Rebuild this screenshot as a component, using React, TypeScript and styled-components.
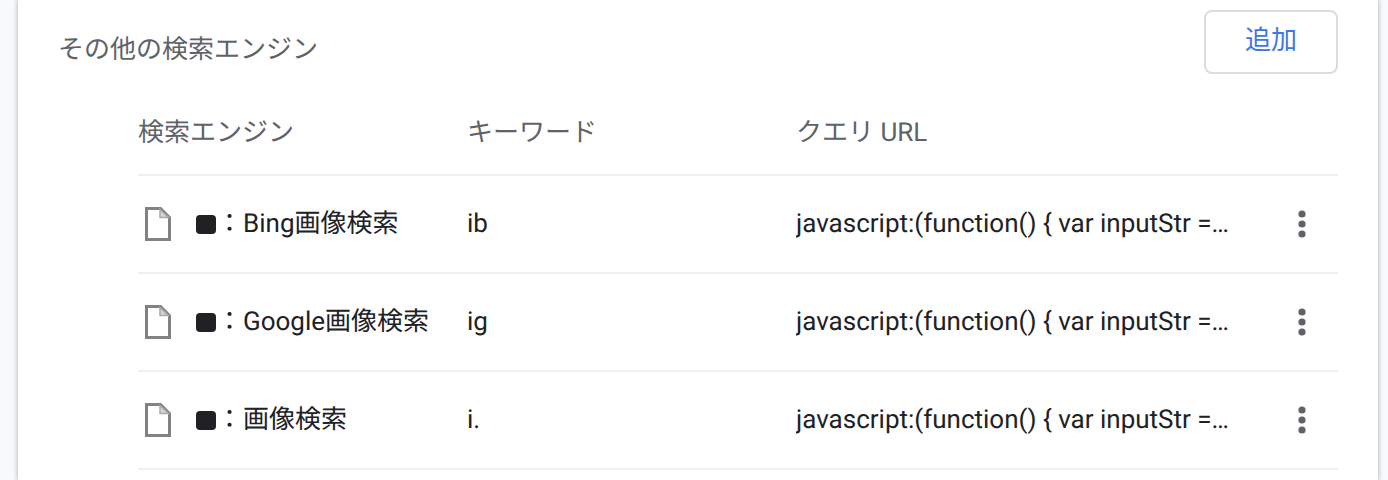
import { createGlobalStyle } from "styled-components";
import styled from "styled-components";

const GlobalStyle = createGlobalStyle`
  html, body {
    margin: 0;
    height: 480px;
    overflow: hidden;
    background: #f8f9fa;
    font-family: Roboto, "Noto Sans CJK JP", sans-serif;
    text-rendering: geometricPrecision;
  }
`;

const Card = styled.section`
  margin-left: 18px;
  width: 1360px;
  height: 480px;
  box-sizing: border-box;
  padding: 10px 40px 0;
  background: #fff;
  box-shadow: 0 0 5px rgba(60, 64, 67, 0.45);
`;

const TitleRow = styled.header`
  display: flex;
  align-items: flex-start;
  justify-content: space-between;
  height: 64px;
`;

const Title = styled.h2`
  margin: 22px 0 0;
  font-size: 26px;
  line-height: 36px;
  font-weight: 400;
  color: #5f6368;
`;

const AddButton = styled.button`
  width: 134px;
  height: 64px;
  box-sizing: border-box;
  padding: 0 0 10px;
  background: #fff;
  border: 2px solid #dadce0;
  border-radius: 8px;
  font: inherit;
  font-size: 26px;
  color: #3b78e7;
`;

const Table = styled.div`
  margin-left: 80px;
`;

const columns = "329px 329px 1fr 80px";

const HeaderRow = styled.div`
  display: grid;
  grid-template-columns: ${columns};
  align-items: center;
  height: 102px;
  box-sizing: border-box;
  padding-top: 17px;
  border-bottom: 2px solid #f0f0f1;
  font-size: 26px;
  line-height: 36px;
  color: #5f6368;
`;

const Row = styled.div`
  display: grid;
  grid-template-columns: ${columns};
  align-items: center;
  height: 98px;
  box-sizing: border-box;
  border-bottom: 2px solid #f0f0f1;
  font-size: 26px;
  line-height: 36px;
  color: #202124;
`;

const NameCell = styled.div`
  display: flex;
  align-items: center;
  white-space: nowrap;
`;

const PageIcon = styled.svg`
  flex: none;
  width: 26px;
  height: 34px;
  margin: 0 25px 0 7px;
`;

const Bullet = styled.span`
  flex: none;
  width: 20px;
  height: 19px;
  border-radius: 4px;
  background: #202124;
`;

const Colon = styled.span`
  flex: none;
  width: 27px;
  text-align: center;
`;

const UrlCell = styled.div`
  white-space: nowrap;
  overflow: hidden;
`;

const MoreButton = styled.button`
  justify-self: end;
  display: flex;
  align-items: center;
  justify-content: center;
  width: 72px;
  height: 72px;
  padding: 0;
  background: none;
  border: none;
  color: #5f6368;
`;

const engines = [
  { name: "Bing画像検索", keyword: "ib" },
  { name: "Google画像検索", keyword: "ig" },
  { name: "画像検索", keyword: "i." },
];

const App = () => {
  return (
    <>
      <GlobalStyle />
      <Card>
        <TitleRow>
          <Title>その他の検索エンジン</Title>
          <AddButton>追加</AddButton>
        </TitleRow>
        <Table>
          <HeaderRow>
            <div>検索エンジン</div>
            <div>キーワード</div>
            <div>クエリ URL</div>
          </HeaderRow>
          {engines.map((engine) => (
            <Row key={engine.keyword}>
              <NameCell>
                <PageIcon viewBox="0 0 26 34" fill="none" stroke="#808285" strokeWidth="3">
                  <path d="M1.5 1.5H15.5L24.5 10.5V32.5H1.5Z" />
                  <path d="M15 2.5V10.5H23.5Z" fill="#d4d5d6" stroke="#a8aaac" strokeWidth="1.5" />
                </PageIcon>
                <Bullet />
                <Colon>：</Colon>
                {engine.name}
              </NameCell>
              <div>{engine.keyword}</div>
              <UrlCell>javascript:(function() {"{"} var inputStr =…</UrlCell>
              <MoreButton aria-label="その他の操作">
                <svg width="12" height="28" viewBox="0 0 12 28" fill="currentColor">
                  <circle cx="6" cy="4" r="3.6" />
                  <circle cx="6" cy="14" r="3.6" />
                  <circle cx="6" cy="24" r="3.6" />
                </svg>
              </MoreButton>
            </Row>
          ))}
        </Table>
      </Card>
    </>
  );
};

export default App;
